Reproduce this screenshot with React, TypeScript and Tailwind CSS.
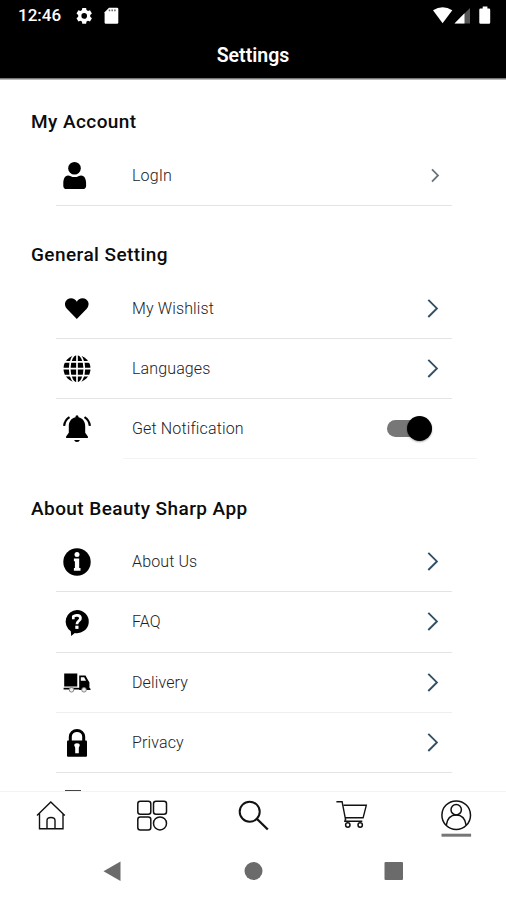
import type { ReactNode } from 'react';

const font = "font-['Roboto','Noto_Sans',sans-serif]";

function Heading({ children, className = '' }: { children: ReactNode; className?: string }) {
  return (
    <h2
      className={`pl-[31px] text-[19px] leading-6 font-medium tracking-[0.43px] whitespace-nowrap text-[#0c0c0c] ${className}`}
    >
      {children}
    </h2>
  );
}

function Icon({ children }: { children: ReactNode }) {
  return (
    <svg viewBox="0 0 32 31" className="ml-[5px] h-[31px] w-8 shrink-0" fill="#000">
      {children}
    </svg>
  );
}

function Chevron({ small = false }: { small?: boolean }) {
  return (
    <svg viewBox="0 0 20 20" className="mr-[9px] h-5 w-5 shrink-0" fill="none">
      {small ? (
        <path d="M9 3.300 15 9.400 9 15.700" stroke="#66757a" strokeWidth="1.800" />
      ) : (
        <path d="M5.300 .8 13.900 9.400 5.300 18" stroke="#315066" strokeWidth="1.900" />
      )}
    </svg>
  );
}

type RowProps = { icon: ReactNode; label: string; height?: string; line?: string; end?: ReactNode };

function Row({ icon, label, height = 'h-[60px]', line = 'border-[#e4e4e4]', end = <Chevron /> }: RowProps) {
  return (
    <li className={`mr-[54px] ml-14 flex items-center border-b ${height} ${line}`}>
      <Icon>{icon}</Icon>
      <span className="ml-[39px] flex-1 text-[16px] font-light tracking-[0.13px] whitespace-nowrap text-[#222]">{label}</span>
      {end}
    </li>
  );
}

const user = (
  <>
    <circle cx="13.5" cy="8.3" r="6.3" />
    <path d="M7 15.4c2 0 3.300 1.700 6.600 1.700s4.600-1.700 6.600-1.700c3.200 0 4.900 3.600 4.900 7.900v2.700c0 2.100-1.300 3.100-3.300 3.100H5.500c-2 0-3.200-1-3.200-3.100v-2.700c0-4.300 1.600-7.900 4.700-7.900Z" />
  </>
);
const heart = (
  <path d="M15.800 26 6.100 16.100C1.600 11.200 4.900 5.300 10 5.300c2.700 0 4.700 1.400 5.800 3.500C16.900 6.700 18.900 5.300 21.600 5.300c5.100 0 8.400 5.900 3.900 10.800Z" />
);
const globe = (
  <>
    <circle cx="16" cy="15.700" r="13.500" />
    <g fill="none" stroke="#fff" strokeWidth="1.700">
      <path d="M16 1v29M2 15.700h28M4 8.800h24M4 22.600h24" />
      <ellipse cx="16" cy="15.700" rx="7.300" ry="14.500" />
    </g>
  </>
);
const bell = (
  <>
    <path d="M16 2.200c1 0 1.500.9 1.500 2.100 4.400 1.100 6.700 4.400 6.700 9v6.500l2.700 3.800v1.400H5.100v-1.400l2.700-3.800v-6.500c0-4.600 2.300-7.900 6.700-9 0-1.200.5-2.100 1.500-2.100ZM13.200 27h5.600c-.3 1.300-1.300 2-2.800 2s-2.500-.7-2.800-2Z" />
    <path d="M8.500 4.100C5.500 6 3.500 9 3.100 12.800M23.500 4.100c3 1.900 5 4.900 5.400 8.700" fill="none" stroke="#000" strokeWidth="2.200" />
  </>
);
const info = (
  <>
    <circle cx="16" cy="16" r="13.700" />
    <circle cx="16" cy="8.500" r="2.500" fill="#fff" />
    <path d="M12.900 12.500h5.300v9.600h1.300v2.700h-6.600v-2.700h1v-6.800h-1Z" fill="#fff" />
  </>
);
const faq = (
  <>
    <path d="M16 3a11.800 11.600 0 1 1-2.200 23l-3.600 3-.4-4.800A11.800 11.600 0 0 1 16 3Z" />
    <path d="M12.300 12.300V9.500c1.700-1.700 6.800-1.800 7.200 1.300.4 2.800-3.600 3-3.600 6.400" fill="none" stroke="#fff" strokeWidth="2.700" />
    <rect x="14.300" y="18.700" width="3.200" height="3.200" fill="#fff" />
  </>
);
const truck = (
  <>
    <path d="M3.200 6.500h13.200v13H3.200ZM2.600 20.700h25v1.800h-25Z" />
    <path d="M18.200 8.500h6.300l2.600 4.700 1.300 2v5.500l1.100 1v1.200H18.200Z" />
    <path d="M19.800 10.300h3.400l1.800 3.400h-5.200Z" fill="#fff" />
    <path d="M17.200 6.500v14" stroke="#fff" strokeWidth="1" />
    <g fill="#eee" stroke="#777" strokeWidth=".9">
      <circle cx="10.500" cy="22.800" r="2.300" />
      <circle cx="23" cy="22.800" r="2.300" />
    </g>
  </>
);
const lock = (
  <>
    <path d="M9.300 15V9.800a6.700 6.400 0 0 1 13.400 0V15" fill="none" stroke="#000" strokeWidth="3" />
    <rect x="6" y="13.500" width="20" height="16.200" rx="1" />
    <path d="M13.200 18.200a2.800 2 0 0 1 5.600 0l-1 2.600v5.400h-3.600v-5.400Z" fill="#fff" />
  </>
);

function Toggle() {
  return (
    <span className="mr-5 flex h-[25px] w-[45px] items-center" role="switch" aria-checked="true">
      <span className="flex h-[17px] w-full items-center justify-end rounded-full bg-[#777]">
        <span className="size-[25px] shrink-0 rounded-full bg-black shadow-[0_1px_2px_rgba(0,0,0,0.35)]" />
      </span>
    </span>
  );
}

function StatusBar() {
  return (
    <div className="flex h-8 items-center pr-[15px] pl-[18px] text-white">
      <span className="w-[57px] text-[17px] font-medium">12:46</span>
      <svg viewBox="0 0 44 20" className="h-5 w-11" fill="#fff">
        <path fillRule="evenodd" d="m7.300 2-.4 2.100-1.500.9-2-.8L1.500 7.600l1.700 1.400v1.800l-1.700 1.400 1.900 3.300 2-.8 1.500.9.400 2.100h3.800l.4-2.100 1.500-.9 2 .8 1.900-3.300-1.700-1.400V9l1.700-1.400L15 4.200l-2 .8-1.500-.9L11.100 2Zm1.900 5.100a2.800 2.800 0 1 1 0 5.600 2.800 2.800 0 0 1 0-5.600Z" />
        <path d="M34 1.800h8a1.300 1.300 0 0 1 1.300 1.300V16.400a1.300 1.300 0 0 1-1.300 1.300H30.900a1.300 1.300 0 0 1-1.300-1.300V6.300Z" />
        <path d="M34.500 3.400v1.900M37.200 3.400v1.900M39.900 3.400v1.900" stroke="#666" strokeWidth="1.500" />
      </svg>
      <svg viewBox="0 0 60 20" className="ml-auto h-5 w-[60px]" fill="#fff">
        <path d="M2 4.200Q11.700-1.800 21.300 4.200L11.600 17.300Z" />
        <path d="M39 2V17.500H23.500Z" fill="#555" />
        <path d="M33.500 7.300V17.500H23.500Z" />
        <path d="M49.500 2.500h2.200V.600h4.700v1.900h1.600q1.200 0 1.200 1.200V16.500q0 1.200-1.200 1.200H49.500q-1.200 0-1.200-1.200V3.700q0-1.200 1.200-1.200Z" />
      </svg>
    </div>
  );
}

function Tab({ children }: { children: ReactNode }) {
  return (
    <svg viewBox="0 0 101.200 50" className="h-[50px] min-w-0 flex-1" fill="none" stroke="#111" strokeWidth="1.500">
      {children}
    </svg>
  );
}

export default function App() {
  return (
    <div className={`flex h-[900px] w-[506px] flex-col overflow-hidden bg-white ${font}`}>
      <header className="h-[79px] shrink-0 border-b border-[#777] bg-black">
        <StatusBar />
        <h1 className="mt-3 text-center text-[19.5px] leading-6 font-semibold text-white">Settings</h1>
      </header>

      <main className="h-[712px] shrink-0 overflow-hidden border-t border-[#b8b8b8]">
        <Heading className="mt-[30px]">My Account</Heading>
        <ul className="mt-3">
          <Row icon={user} label="LogIn" end={<Chevron small />} />
        </ul>
        <Heading className="mt-[37px]">General Setting</Heading>
        <ul className="mt-3">
          <Row icon={heart} label="My Wishlist" />
          <Row icon={globe} label="Languages" />
          <Row icon={bell} label="Get Notification" line="border-transparent" end={<Toggle />} />
        </ul>
        <div className="mr-[29px] -mt-px ml-[123px] h-px bg-[#f4f4f4]" />
        <Heading className="mt-[38px]">About Beauty Sharp App</Heading>
        <ul className="mt-[11px]">
          <Row icon={info} label="About Us" />
          <Row icon={faq} label="FAQ" height="h-[61px]" />
          <Row icon={truck} label="Delivery" line="border-[#efefef]" />
          <Row icon={lock} label="Privacy" />
        </ul>
        <div className="mt-[17px] ml-[65px] h-[2px] w-4 bg-[#444]" />
      </main>

      <nav className="flex h-[50px] shrink-0 border-t border-[#f3f3f3]">
        <Tab>
          <path d="M37 23.500 50.800 10 64.800 23.500M39.500 21.500V36.700H63V21.500M47 36.700V28.500q0-3 4-3t4 3V36.700" strokeWidth="1.400" />
        </Tab>
        <Tab>
          <rect x="36.800" y="9.200" width="13" height="13" rx="2.500" />
          <rect x="52.500" y="9.200" width="13" height="13" rx="2.500" />
          <rect x="36.800" y="24.900" width="13" height="13" rx="2.500" />
          <circle cx="59" cy="31.400" r="6.500" />
        </Tab>
        <Tab>
          <circle cx="47.700" cy="19.700" r="10" strokeWidth="2" />
          <path d="m54.800 26.800 11 10.700" strokeWidth="2.300" />
        </Tab>
        <Tab>
          <path d="M32.400 9.700h5.700l3.600 18.600M39.700 13.300h22.600l-3.200 12.500H41.300M41.700 25.800l-.8 3.400h17.400" strokeWidth="1.400" />
          <circle cx="43.800" cy="33" r="2.200" />
          <circle cx="56.200" cy="33" r="2.200" />
        </Tab>
        <Tab>
          <circle cx="51.200" cy="23.200" r="14.300" />
          <circle cx="51.200" cy="17.700" r="5.200" />
          <path d="M41.300 33.200c.8-6.700 4.500-10.300 9.900-10.300s9.100 3.600 9.900 10.300" />
          <path d="M36.500 43.200h29.600" stroke="#777" strokeWidth="3" />
        </Tab>
      </nav>

      <div className="flex h-[59px] items-center pl-[103px]">
        <svg viewBox="0 0 300 22" className="h-[22px] w-[300px]" fill="#6b6b6b">
          <path d="M.5 11.200 17.500 1.500V21Z" />
          <circle cx="150.500" cy="11" r="9" />
          <rect x="281.500" y="2" width="18.500" height="18" rx="1" />
        </svg>
      </div>
    </div>
  );
}
